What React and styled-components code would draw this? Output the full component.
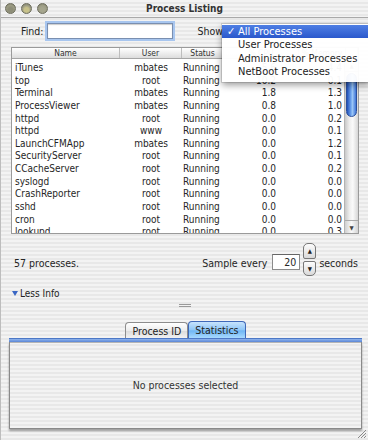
import React from "react";
import styled, { createGlobalStyle } from "styled-components";

const font = `"DejaVu Sans Condensed", "DejaVu Sans", sans-serif`;
const pinstripe = `repeating-linear-gradient(to bottom, #f3f3f3 0px, #f3f3f3 2px, #e8e8e8 2px, #e8e8e8 4px)`;
const columns = "108px 62px 42px 75px 47px";

const GlobalStyle = createGlobalStyle`
  html, body {
    margin: 0;
    padding: 0;
  }
  body {
    width: 368px;
    height: 440px;
    overflow: hidden;
    font-family: ${font};
  }
`;

const Window = styled.div`
  position: relative;
  width: 368px;
  height: 440px;
  box-sizing: border-box;
  border-left: 1px solid #bdbdbd;
  background: ${pinstripe};
  display: flex;
  flex-direction: column;
  color: #262626;
  font-size: 10px;
  overflow: hidden;
`;

const TitleBar = styled.div`
  flex: none;
  height: 18px;
  box-sizing: border-box;
  border-bottom: 1px solid #a9a9a9;
  display: grid;
  grid-template-columns: 1fr auto 1fr;
  align-items: center;
`;

const Lights = styled.div`
  display: flex;
  gap: 5px;
  padding-left: 4px;
`;

const Light = styled.span`
  width: 11px;
  height: 11px;
  border-radius: 50%;
  box-sizing: border-box;
  border: 1px solid #6d6d5c;
  background: radial-gradient(circle at 50% 65%, ${(p) => p.$inner} 0 30%, #9c9c84 60%, #7a7a66 100%);
`;

const Title = styled.div`
  font-size: 10px;
  font-weight: bold;
  color: #333;
`;

const FindRow = styled.div`
  flex: none;
  height: 29px;
  box-sizing: border-box;
  padding: 0 0 3px 20px;
  display: flex;
  align-items: center;
`;

const Label = styled.span`
  font-size: 10.5px;
  color: #222;
  margin-right: ${(p) => p.$gap || 0}px;
  margin-left: ${(p) => p.$lead || 0}px;
`;

const SearchField = styled.div`
  width: 124px;
  height: 14px;
  background: #fff;
  border: 1px solid #7a8fb0;
  box-shadow: 0 0 0 2px #a8c6ef, inset 0 1px 1px rgba(0, 0, 0, 0.2);
`;

const Table = styled.div`
  flex: none;
  margin-left: 10px;
  width: 348px;
  height: 187px;
  box-sizing: border-box;
  border: 1px solid #9a9a9a;
  display: flex;
  flex-direction: column;
  background: #fff;
`;

const Header = styled.div`
  flex: none;
  height: 10px;
  display: grid;
  grid-template-columns: ${columns} 1fr;
  background: linear-gradient(#ffffff, #dcdcdc);
  border-bottom: 1px solid #a5a5a5;
  font-size: 8.5px;
  color: #333;
`;

const HeadCell = styled.div`
  text-align: center;
  line-height: 10px;
  border-right: 1px solid #bdbdbd;
  overflow: hidden;
  white-space: nowrap;
`;

const BodyArea = styled.div`
  flex: 1;
  display: flex;
  min-height: 0;
`;

const List = styled.div`
  flex: 1;
  overflow: hidden;
  padding-top: 3px;
`;

const Row = styled.div`
  display: grid;
  grid-template-columns: ${columns};
  height: 12.65px;
  line-height: 12.65px;
  font-size: 10px;
  color: #262626;
`;

const Cell = styled.div`
  white-space: nowrap;
  overflow: hidden;
  text-align: ${(p) => p.$align || "left"};
  padding-left: ${(p) => p.$pl || 0}px;
  padding-right: ${(p) => p.$pr || 0}px;
`;

const Scroller = styled.div`
  flex: none;
  width: 13px;
  display: flex;
  flex-direction: column;
  background: linear-gradient(to right, #c9c9c9, #eeeeee 35%, #fafafa 60%, #d6d6d6);
  border-left: 1px solid #b3b3b3;
`;

const Arrow = styled.div`
  flex: none;
  height: 12px;
  display: flex;
  align-items: center;
  justify-content: center;
  font-size: 6px;
  color: #444;
  background: linear-gradient(to right, #d0d0d0, #fafafa 50%, #d4d4d4);
  border-top: ${(p) => (p.$down ? "1px solid #aaa" : "none")};
  border-bottom: ${(p) => (p.$down ? "none" : "1px solid #aaa")};
`;

const Track = styled.div`
  flex: 1;
  padding: 1px 1px;
`;

const Thumb = styled.div`
  height: 44px;
  border-radius: 6px;
  background: linear-gradient(to right, #1f4fb8, #6ea4ee 45%, #9cc7f7 60%, #3e74d6);
  border: 1px solid #2a4f9c;
  box-sizing: border-box;
`;

const Footer = styled.div`
  flex: none;
  height: 50px;
  display: flex;
  align-items: flex-start;
  padding: 0 0 0 13px;
`;

const FooterText = styled.span`
  font-size: 10.5px;
  margin-top: ${(p) => p.$top}px;
  margin-right: ${(p) => p.$gap || 0}px;
`;

const Spacer = styled.div`
  flex: 1;
`;

const NumberField = styled.div`
  width: 28px;
  height: 16px;
  margin-top: 20px;
  box-sizing: border-box;
  background: #fff;
  border: 1px solid #8b8b8b;
  border-top-color: #666;
  font-size: 10.5px;
  text-align: right;
  padding-right: 3px;
  line-height: 14px;
`;

const Stepper = styled.div`
  width: 13px;
  height: 33px;
  margin: 9px 3px 0 3px;
  display: flex;
  flex-direction: column;
  gap: 2px;
`;

const StepButton = styled.div`
  flex: 1;
  border: 1px solid #777;
  border-radius: ${(p) => (p.$down ? "2px 2px 5px 5px" : "5px 5px 2px 2px")};
  background: linear-gradient(#fdfdfd, #d9d9d9);
  display: flex;
  align-items: center;
  justify-content: center;
  font-size: 6px;
  color: #222;
`;

const Disclosure = styled.div`
  flex: none;
  height: 18px;
  display: flex;
  align-items: center;
  padding-left: 11px;
  gap: 1px;
  font-size: 10px;
  color: #222;
`;

const Tri = styled.span`
  width: 0;
  height: 0;
  border-left: 3.5px solid transparent;
  border-right: 3.5px solid transparent;
  border-top: 5px solid #3a67c4;
  margin-right: 1px;
`;

const Splitter = styled.div`
  flex: none;
  height: 6px;
  display: flex;
  flex-direction: column;
  align-items: center;
  justify-content: center;
  gap: 1px;
`;

const Grip = styled.span`
  width: 12px;
  height: 1px;
  background: #9a9a9a;
`;

const TabView = styled.div`
  flex: none;
  margin: 13px 6px 0 8px;
  display: flex;
  flex-direction: column;
`;

const Tabs = styled.div`
  display: flex;
  justify-content: center;
  align-items: flex-end;
  height: 17px;
`;

const Tab = styled.div`
  height: ${(p) => (p.$active ? 17 : 16)}px;
  box-sizing: border-box;
  padding: 0 6px;
  display: flex;
  align-items: center;
  font-size: 10.5px;
  color: #222;
  border: 1px solid ${(p) => (p.$active ? "#3f68b8" : "#8c8c8c")};
  border-bottom: none;
  border-radius: 4px 4px 0 0;
  background: ${(p) =>
    p.$active
      ? "linear-gradient(#c7e3fd, #8ec6f7 50%, #6fb6f4 55%, #a8daff)"
      : "linear-gradient(#ffffff, #ececec 50%, #dcdcdc 55%, #f2f2f2)"};
`;

const Strip = styled.div`
  height: 3px;
  background: linear-gradient(#8fb4ec, #5a86d6);
  border-top: 1px solid #4d78c6;
`;

const TabBox = styled.div`
  height: 87px;
  box-sizing: border-box;
  background: ${pinstripe};
  border: 1px solid #8a8a8a;
  border-top: none;
  box-shadow: 0 2px 2px rgba(0, 0, 0, 0.35), inset 0 1px 0 #b5b5b5;
  display: flex;
  align-items: center;
  justify-content: center;
  font-size: 10.5px;
  color: #333;
`;

const ResizeGrip = styled.svg`
  position: absolute;
  right: 1px;
  bottom: 1px;
`;

const Menu = styled.div`
  position: absolute;
  left: 221px;
  top: 24px;
  width: 148px;
  padding: 1px 0 3px;
  background: rgba(255, 255, 255, 0.96);
  box-shadow: 0 3px 7px rgba(0, 0, 0, 0.4), 0 0 0 1px rgba(0, 0, 0, 0.12);
  font-size: 11px;
`;

const MenuItem = styled.div`
  height: 13.4px;
  line-height: 13.4px;
  padding-left: 16px;
  position: relative;
  color: ${(p) => (p.$selected ? "#fff" : "#222")};
  background: ${(p) => (p.$selected ? "linear-gradient(#4f7fe4, #2a58cc)" : "none")};
  white-space: nowrap;
`;

const Check = styled.span`
  position: absolute;
  left: 5px;
`;

const processes = [
  ["iTunes", "mbates", "Running", "5.6", "4.4"],
  ["top", "root", "Running", "10.2", "0.1"],
  ["Terminal", "mbates", "Running", "1.8", "1.3"],
  ["ProcessViewer", "mbates", "Running", "0.8", "1.0"],
  ["httpd", "root", "Running", "0.0", "0.2"],
  ["httpd", "www", "Running", "0.0", "0.1"],
  ["LaunchCFMApp", "mbates", "Running", "0.0", "1.2"],
  ["SecurityServer", "root", "Running", "0.0", "0.1"],
  ["CCacheServer", "root", "Running", "0.0", "0.2"],
  ["syslogd", "root", "Running", "0.0", "0.0"],
  ["CrashReporter", "root", "Running", "0.0", "0.0"],
  ["sshd", "root", "Running", "0.0", "0.0"],
  ["cron", "root", "Running", "0.0", "0.0"],
  ["lookupd", "root", "Running", "0.0", "0.3"],
];

const menuItems = ["All Processes", "User Processes", "Administrator Processes", "NetBoot Processes"];

export default function App() {
  return (
    <>
      <GlobalStyle />
      <Window>
        <TitleBar>
          <Lights>
            <Light $inner="#8e8e78" />
            <Light $inner="#c8c28a" />
            <Light $inner="#a6a68e" />
          </Lights>
          <Title>Process Listing</Title>
          <div />
        </TitleBar>

        <FindRow>
          <Label $gap={4}>Find:</Label>
          <SearchField />
          <Label $lead={24}>Show</Label>
        </FindRow>

        <Table>
          <Header>
            <HeadCell>Name</HeadCell>
            <HeadCell>User</HeadCell>
            <HeadCell>Status</HeadCell>
            <HeadCell>% CPU</HeadCell>
            <HeadCell>% Memory</HeadCell>
            <HeadCell />
          </Header>
          <BodyArea>
            <List>
              {processes.map(([name, user, status, cpu, mem], i) => (
                <Row key={i}>
                  <Cell $pl={3}>{name}</Cell>
                  <Cell $align="center">{user}</Cell>
                  <Cell $pl={1}>{status}</Cell>
                  <Cell $align="right" $pr={23}>{cpu}</Cell>
                  <Cell $align="right" $pr={4}>{mem}</Cell>
                </Row>
              ))}
            </List>
            <Scroller>
              <Arrow>▲</Arrow>
              <Track>
                <Thumb />
              </Track>
              <Arrow $down>▼</Arrow>
            </Scroller>
          </BodyArea>
        </Table>

        <Footer>
          <FooterText $top={23}>57 processes.</FooterText>
          <Spacer />
          <FooterText $top={23} $gap={5}>Sample every</FooterText>
          <NumberField>20</NumberField>
          <Stepper>
            <StepButton>▲</StepButton>
            <StepButton $down>▼</StepButton>
          </Stepper>
          <FooterText $top={23} $gap={10}>seconds</FooterText>
        </Footer>

        <Disclosure>
          <Tri />
          Less Info
        </Disclosure>

        <Splitter>
          <Grip />
          <Grip />
        </Splitter>

        <TabView>
          <Tabs>
            <Tab>Process ID</Tab>
            <Tab $active>Statistics</Tab>
          </Tabs>
          <Strip />
          <TabBox>No processes selected</TabBox>
        </TabView>

        <ResizeGrip width="10" height="10" viewBox="0 0 10 10">
          <path d="M9 1L1 9M9 4L4 9M9 7L7 9" stroke="#8a8a8a" strokeWidth="1" />
        </ResizeGrip>

        <Menu>
          {menuItems.map((item, i) => (
            <MenuItem key={item} $selected={i === 0}>
              {i === 0 && <Check>✓</Check>}
              {item}
            </MenuItem>
          ))}
        </Menu>
      </Window>
    </>
  );
}
